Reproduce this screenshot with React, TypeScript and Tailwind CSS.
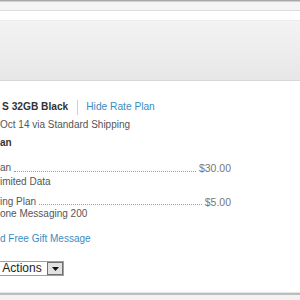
import React from 'react'

const PriceRow = ({ label, price }: { label: string; price: string }) => (
  <div className="flex items-end w-[231px]">
    <span className="text-[#555] whitespace-nowrap">{label}</span>
    <span className="flex-1 mx-[3px] mb-[3px] border-b border-dotted border-[#999]" />
    <span className="text-[#777] whitespace-nowrap text-[10.5px]">{price}</span>
  </div>
)

export default function App() {
  return (
    <div className="w-[300px] h-[300px] overflow-hidden bg-white flex flex-col font-['Liberation_Sans',Arial,sans-serif] text-[10px]">
      {/* top chrome */}
      <div className="h-[1px] bg-[#a8a8a8]" />
      <div className="h-[1px] bg-[#d0d0d0]" />
      <div className="h-[8px] bg-[#f4f4f4]" />
      <div className="h-[1px] bg-[#dcdcdc]" />
      <div className="h-[9px] bg-white" />
      <div className="h-[60px] bg-gradient-to-b from-[#f3f3f3] to-[#e7e7e7] border-t border-[#ececec]" />
      <div className="h-[1px] bg-[#d8d8d8]" />

      <div className="flex-1 flex flex-col pl-[2px]">
        <div className="mt-[19px] h-[14px] leading-[14px] flex items-center">
          <span className="font-bold text-[#333] text-[10.2px]">S 32GB Black</span>
          <span className="ml-[9px] mr-[8px] w-[1px] h-[15px] bg-[#cfcfcf]" />
          <span className="text-[#3b8cc2] text-[10.2px]">Hide Rate Plan</span>
        </div>
        <div className="mt-[4px] h-[14px] leading-[14px] text-[#555] -ml-[2px]">Oct 14 via Standard Shipping</div>
        <div className="mt-[4px] h-[14px] leading-[14px] font-bold text-[#333] -ml-[2px]">an</div>

        <div className="mt-[11px] h-[14px] leading-[14px] -ml-[2px]">
          <PriceRow label="an" price="$30.00" />
        </div>
        <div className="h-[14px] leading-[14px] text-[#555] -ml-[2px]">imited Data</div>

        <div className="mt-[7px] h-[12px] leading-[12px] -ml-[2px]">
          <PriceRow label="ing Plan" price="$5.00" />
        </div>
        <div className="h-[12px] leading-[12px] text-[#555] -ml-[2px]">one Messaging 200</div>

        <div className="mt-[12px] h-[14px] leading-[14px] text-[#3b8cc2] -ml-[2px]">d Free Gift Message</div>

        <div className="mt-[15px] -ml-[10px] flex items-center w-[72px] h-[15px] border border-[#a0a0a0] bg-white">
          <span className="flex-1 text-[12px] leading-[13px] text-[#222] whitespace-nowrap overflow-hidden">n Actions</span>
          <span className="w-[16px] h-[13px] bg-[#e2e2e2] border border-[#707070] flex items-center justify-center">
            <svg width="7" height="4" viewBox="0 0 7 4">
              <path d="M0 0h7L3.5 4z" fill="#111" />
            </svg>
          </span>
        </div>
      </div>

      {/* bottom chrome */}
      <div className="h-[1px] bg-[#e4e4e4]" />
      <div className="h-[2px] bg-[#bdbdbd]" />
      <div className="h-[5px] bg-[#f2f2f2]" />
    </div>
  )
}
